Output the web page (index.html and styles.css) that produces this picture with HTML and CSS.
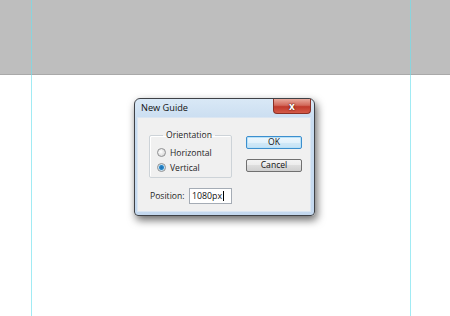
FILE: index.html
```html
<!DOCTYPE html>
<html lang="en">
<head>
    <meta charset="UTF-8">
    <meta name="viewport" content="width=device-width, initial-scale=1.0">
    <title>New Guide</title>
    <link rel="stylesheet" href="styles.css">
</head>
<body>
    <div class="workspace">
        <div class="pasteboard"></div>
        <div class="document"></div>

        <!-- guides -->
        <div class="guide guide-left"></div>
        <div class="guide guide-right"></div>

        <div class="dialog">
            <div class="titlebar">
                <span class="title">New Guide</span>
                <button class="close-btn" type="button">x</button>
            </div>
            <div class="client">
                <div class="left-col">
                    <fieldset class="group">
                        <legend>Orientation</legend>
                        <label class="radio"><span class="radio-dot"></span>Horizontal</label>
                        <label class="radio"><span class="radio-dot checked"></span>Vertical</label>
                    </fieldset>
                    <div class="position-row">
                        <label class="position-label">Position:</label>
                        <div class="text-input">1080px<span class="caret"></span></div>
                    </div>
                </div>
                <div class="buttons">
                    <button class="btn btn-default" type="button">OK</button>
                    <button class="btn" type="button">Cancel</button>
                </div>
            </div>
        </div>
    </div>
</body>
</html>
```

FILE: styles.css
```css
body {
    margin: 0;
    font-family: 'Open Sans', 'Noto Sans', sans-serif;
    font-size: 8.6px;
    color: #1e1e1e;
    background-color: white;
}

.workspace {
    position: relative;
    width: 450px;
    height: 316px;
    overflow: hidden;
}

.pasteboard {
    height: 74px;
    background-color: #bebebe;
    border-bottom: 1px solid #a9a9a9;
}

.document {
    height: 241px;
    background-color: white;
}

.guide {
    position: absolute;
    top: 0;
    bottom: 0;
    width: 1px;
    background-color: rgba(110, 225, 238, 0.65);
}

.guide-left {
    left: 31px;
}

.guide-right {
    left: 410px;
}

/* dialog window */
.dialog {
    position: absolute;
    left: 134px;
    top: 98px;
    width: 181px;
    height: 118px;
    box-sizing: border-box;
    display: flex;
    flex-direction: column;
    border: 1px solid #3e4146;
    border-radius: 6px 6px 4px 4px;
    background: linear-gradient(to bottom, #d9e8f6, #c8dcf0 20%, #c4d8ee);
    box-shadow: 2px 4px 9px rgba(0, 0, 0, 0.6);
}

.titlebar {
    height: 18px;
    display: flex;
    align-items: flex-start;
    flex-shrink: 0;
}

.title {
    padding: 3px 0 0 6px;
    font-size: 9.2px;
    line-height: 12px;
    color: #111;
}

.close-btn {
    margin-left: auto;
    margin-right: 3px;
    width: 38px;
    height: 15px;
    padding: 0;
    border: 1px solid #8a3026;
    border-top: none;
    border-radius: 0 0 4px 4px;
    background: linear-gradient(to bottom, #e9a99c, #d2685a 45%, #c0392b 55%, #d45a48);
    color: white;
    font-family: 'Open Sans', sans-serif;
    font-weight: bold;
    font-size: 10px;
    line-height: 12px;
    text-shadow: 0 0 2px #5a1a12, 0 0 1px #5a1a12;
}

.client {
    flex: 1;
    margin: 0 3px 3px 2px;
    padding: 11px 0 0 11px;
    display: flex;
    gap: 14px;
    background-color: #f0f0f0;
    border: 1px solid #dbe6f2;
    box-sizing: border-box;
}

.group {
    width: 83px;
    box-sizing: border-box;
    margin: 0;
    padding: 4px 0 2px 7px;
    border: 1px solid #cdd3d8;
    border-radius: 2px;
    box-shadow: inset 1px 1px 0 white;
}

.group legend {
    margin-left: 6px;
    padding: 0 3px;
    line-height: 12px;
}

.radio {
    display: flex;
    align-items: center;
    gap: 4px;
    height: 15px;
}

.radio-dot {
    width: 9px;
    height: 9px;
    box-sizing: border-box;
    border: 1px solid #8f9092;
    border-radius: 50%;
    background: radial-gradient(circle at 40% 40%, #ffffff, #dcdcdc 70%, #cfcfcf);
}

.radio-dot.checked {
    background: radial-gradient(circle, #1d6fb5 0, #2a88c8 2px, #c9e3f3 3px, #f4f4f4 4px);
}

.position-row {
    display: flex;
    align-items: center;
    margin-top: 10px;
    padding-left: 1px;
}

.position-label {
    width: 39px;
}

.text-input {
    width: 43px;
    height: 16px;
    box-sizing: border-box;
    padding-left: 2px;
    display: flex;
    align-items: center;
    background-color: white;
    border: 1px solid #a5acb5;
    font-size: 8.8px;
    color: #111;
}

.caret {
    width: 1px;
    height: 10px;
    margin-left: 1px;
    background-color: #000;
}

.buttons {
    display: flex;
    flex-direction: column;
    gap: 10px;
    margin-top: 7px;
}

.btn {
    width: 56px;
    height: 13px;
    padding: 0;
    border: 1px solid #707070;
    border-radius: 2px;
    background: linear-gradient(to bottom, #f3f3f3, #ebebeb 50%, #dddddd 50%, #cfcfcf);
    font-family: 'Open Sans', 'Noto Sans', sans-serif;
    font-size: 8.6px;
    line-height: 11px;
    color: #111;
}

.btn-default {
    border-color: #3c8fce;
    background: linear-gradient(to bottom, #eef7fd, #e2f1fb 50%, #d1e9f8 50%, #c6e2f4);
    box-shadow: inset 0 0 0 1px #b8e1f8;
}
```
